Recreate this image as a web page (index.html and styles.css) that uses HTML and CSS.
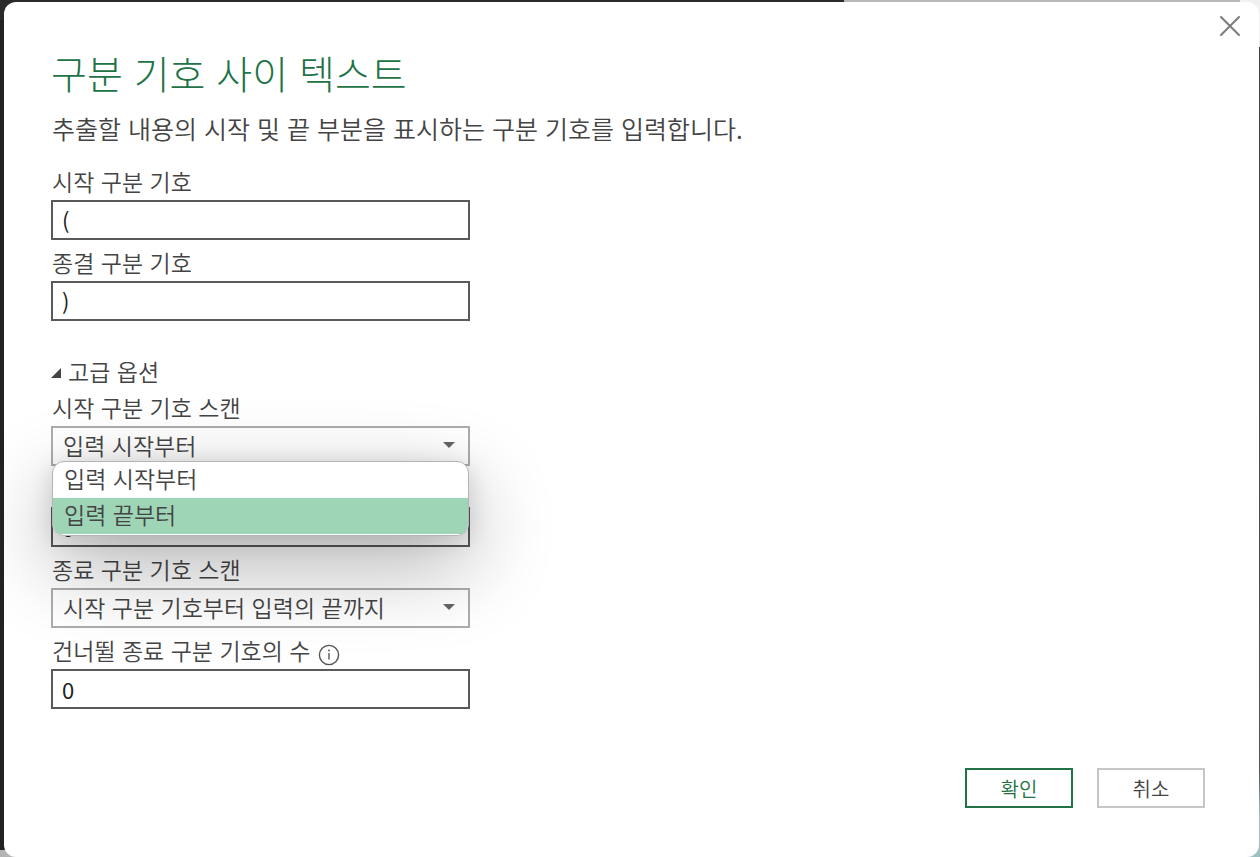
FILE: index.html
```html
<!DOCTYPE html>
<html lang="ko">
<head>
    <meta charset="UTF-8">
    <meta name="viewport" content="width=device-width, initial-scale=1.0">
    <title>구분 기호 사이 텍스트</title>
    <link rel="stylesheet" href="styles.css">
</head>
<body>
    <form class="dialog" role="dialog" aria-labelledby="dialog-title">
        <button type="button" class="close-btn" aria-label="닫기">
            <svg width="22" height="22" viewBox="0 0 22 22"><path d="M2 2 L20 20 M20 2 L2 20" fill="none" stroke="#7c7c7c" stroke-width="2" stroke-linecap="round"/></svg>
        </button>

        <h1 id="dialog-title">구분 기호 사이 텍스트</h1>
        <p class="description">추출할 내용의 시작 및 끝 부분을 표시하는 구분 기호를 입력합니다.</p>

        <div class="fields">
            <div class="field">
                <label for="start-delimiter">시작 구분 기호</label>
                <input type="text" id="start-delimiter" class="text-input" value="(">
            </div>
            <div class="field">
                <label for="end-delimiter">종결 구분 기호</label>
                <input type="text" id="end-delimiter" class="text-input" value=")">
            </div>
        </div>

        <button type="button" class="advanced-btn" aria-expanded="true">
            <svg width="10" height="10" viewBox="0 0 10 10"><path d="M10 0 V10 H0 Z" fill="#444"/></svg>
            고급 옵션
        </button>

        <div class="fields">
            <div class="field">
                <label for="start-scan">시작 구분 기호 스캔</label>
                <div class="select-wrap">
                    <select id="start-scan" class="select">
                        <option selected>입력 시작부터</option>
                        <option>입력 끝부터</option>
                    </select>
                    <svg class="arrow" width="12" height="6" viewBox="0 0 12 6"><path d="M0 0 H12 L6 6 Z" fill="#666"/></svg>
                    <ul class="menu" role="listbox" aria-label="시작 구분 기호 스캔">
                        <li role="option" aria-selected="false">입력 시작부터</li>
                        <li role="option" aria-selected="true" class="active">입력 끝부터</li>
                    </ul>
                </div>
            </div>
            <div class="field field-covered">
                <input type="text" class="text-input" aria-label="건너뛸 시작 구분 기호의 수" value="0">
            </div>
            <div class="field">
                <label for="end-scan">종료 구분 기호 스캔</label>
                <div class="select-wrap">
                    <select id="end-scan" class="select">
                        <option selected>시작 구분 기호부터 입력의 끝까지</option>
                    </select>
                    <svg class="arrow" width="12" height="6" viewBox="0 0 12 6"><path d="M0 0 H12 L6 6 Z" fill="#666"/></svg>
                </div>
            </div>
            <div class="field">
                <label for="end-skip">건너뛸 종료 구분 기호의 수
                    <svg class="info" width="22" height="22" viewBox="0 0 22 22"><circle cx="11" cy="11" r="9.6" fill="none" stroke="#555" stroke-width="1.4"/><path d="M11 9 V15.5" stroke="#555" stroke-width="1.4"/><circle cx="11" cy="6.5" r="0.9" fill="#555"/></svg>
                </label>
                <input type="text" id="end-skip" class="text-input" value="0">
            </div>
        </div>

        <div class="buttons">
            <button type="submit" class="btn btn-ok">확인</button>
            <button type="button" class="btn">취소</button>
        </div>
    </form>
</body>
</html>
```

FILE: styles.css
```css
* {
    box-sizing: border-box;
}
body {
    margin: 0;
    padding: 2px 1px 0 4px;
    min-height: 100vh;
    background:
        linear-gradient(#f0f0f0 47px, #444 47px, #555 90%, #9fc0c0 95%) right / 20px 100% no-repeat,
        linear-gradient(#b4b4b4, #b4b4b4) left bottom / 20px 7px no-repeat,
        linear-gradient(#2a2a2a, #2a2a2a) left top / 67% 20px no-repeat,
        linear-gradient(to right, #222 20px, #b8b8b8 20px);
    color: #444;
    font-family: "Noto Sans CJK KR", sans-serif;
    font-size: 23px;
}
button, input, select {
    font-family: inherit;
    font-size: inherit;
    color: inherit;
    margin: 0;
}
.dialog {
    position: relative;
    display: flex;
    flex-direction: column;
    min-height: calc(100vh - 2px);
    padding: 44px 54px 49px 47px;
    background: #fff;
    border-radius: 12px;
}
.close-btn {
    position: absolute;
    top: 13px;
    right: 18px;
    width: 22px;
    height: 22px;
    padding: 0;
    border: none;
    background: none;
    cursor: pointer;
}
.close-btn svg {
    display: block;
}
h1 {
    margin: 0;
    color: #217346;
    font-size: 39px;
    font-weight: 300;
    line-height: 52px;
}
.description {
    margin: 11px 0 12px 1px;
    font-size: 25px;
    font-weight: 350;
    line-height: 38px;
}
.fields {
    width: 100%;
    max-width: 419px;
}
.field label {
    display: flex;
    align-items: center;
    gap: 7px;
    height: 41px;
    padding: 2px 0 0 1px;
    font-weight: 350;
    white-space: nowrap;
}
/* label row sits under the open menu */
.field-covered {
    padding-top: 41px;
}
.info {
    margin-top: 10px;
}
.text-input {
    display: block;
    width: 100%;
    height: 40px;
    padding: 0 9px;
    border: 2px solid #5a5a5a;
    border-radius: 0;
    background: transparent;
    color: #222;
    font-size: 22px;
}
.advanced-btn {
    display: flex;
    align-items: center;
    gap: 7px;
    align-self: flex-start;
    height: 29px;
    margin-top: 35px;
    padding: 0;
    border: none;
    background: none;
    font-weight: 350;
    cursor: pointer;
}
.advanced-btn svg {
    margin-top: 4px;
}
.select-wrap {
    position: relative;
}
.select {
    display: block;
    width: 100%;
    height: 40px;
    padding: 0 36px 2px 10px;
    appearance: none;
    border: 2px solid #adadad;
    border-radius: 0;
    background: transparent;
    font-weight: 350;
}
.arrow {
    position: absolute;
    top: 16px;
    right: 15px;
    pointer-events: none;
}
.menu {
    position: absolute;
    z-index: 1;
    top: 35px;
    left: 1px;
    right: 1px;
    margin: 0;
    padding: 0 0 1px;
    list-style: none;
    font-weight: 350;
    background: #fff;
    border: 1px solid #b4b4b4;
    border-radius: 12px;
    box-shadow: 0 28px 84px rgba(0, 0, 0, 0.32), 0 4px 24px rgba(0, 0, 0, 0.14);
    overflow: hidden;
}
.menu li {
    height: 36px;
    padding: 0 11px;
    line-height: 33px;
}
.menu .active {
    background: #9fd5b7;
}
.buttons {
    display: flex;
    justify-content: flex-end;
    gap: 24px;
    margin-top: auto;
}
.btn {
    width: 108px;
    height: 40px;
    padding: 0;
    border: 2px solid #c6c6c6;
    background: #fff;
    font-size: 20px;
    font-weight: 350;
    cursor: pointer;
}
.btn-ok {
    border-color: #217346;
    color: #217346;
}
```
